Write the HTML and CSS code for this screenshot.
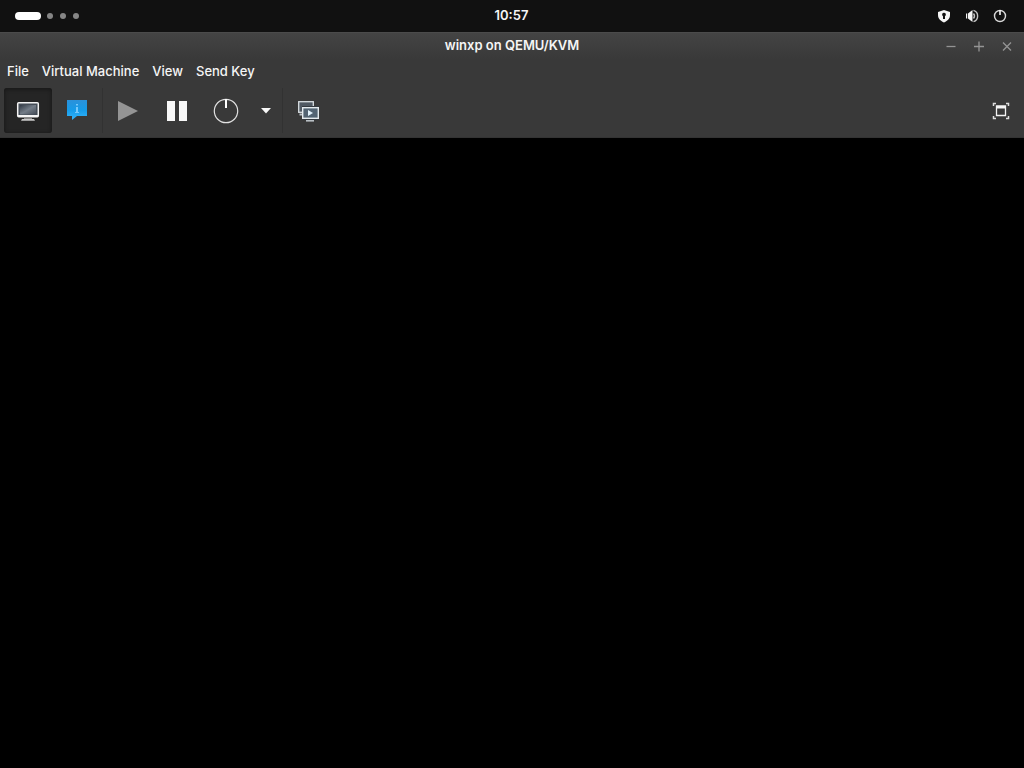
FILE: index.html
```html
<!DOCTYPE html>
<html lang="en">
<head>
<meta charset="utf-8">
<meta name="viewport" content="width=device-width, initial-scale=1">
<title>winxp on QEMU/KVM</title>
<link rel="stylesheet" href="styles.css">
</head>
<body>
<header class="panel">
  <button class="workspaces" aria-label="Workspaces"><span class="dot active"></span><span class="dot"></span><span class="dot"></span><span class="dot"></span></button>
  <time class="clock">10:57</time>
  <div class="status">
    <button aria-label="VPN"><svg width="16" height="16" viewBox="0 0 16 16"><path fill="#f5f5f5" fill-rule="evenodd" d="M8 2 14 4v3c0 4-3 6-6 7.500C5 13 2 11 2 7V4zM8 4.700A1.900 1.900 0 0 0 7 8.200V11h2V8.200A1.900 1.900 0 0 0 8 4.700z"/></svg></button>
    <button aria-label="Volume"><svg width="16" height="16" viewBox="0 0 16 16"><path fill="#f5f5f5" d="M2 5.500h1.200v5H2zM4 5.500 8.500 2v12L4 10.500z"/><path d="M9.500 5.500q2 2.500 0 5M9.500 2.300c5.500 1.700 5.500 9.700 0 11.400" fill="none" stroke="#c4c4c4" stroke-width="1.400"/></svg></button>
    <button aria-label="Power"><svg width="16" height="16" viewBox="0 0 16 16"><circle cx="8" cy="8" r="5.500" fill="none" stroke="#d9d9d9" stroke-width="1.400"/><path d="M8 2v5" stroke="#f5f5f5" stroke-width="1.600"/></svg></button>
  </div>
</header>
<main class="window">
  <div class="titlebar">
    <h1 class="title">winxp on QEMU/KVM</h1>
    <div class="controls">
      <button aria-label="Minimize"><svg width="12" height="12" viewBox="0 0 12 12"><path d="M1.500 6.500h9"/></svg></button>
      <button aria-label="Maximize"><svg width="12" height="12" viewBox="0 0 12 12"><path d="M1 6.500h10M6 1.500v10"/></svg></button>
      <button aria-label="Close"><svg width="12" height="12" viewBox="0 0 12 12"><path d="m2 2.500 8 8m0-8-8 8"/></svg></button>
    </div>
  </div>
  <nav class="menubar">
    <button>File</button><button>Virtual Machine</button><button>View</button><button>Send Key</button>
  </nav>
  <div class="toolbar" role="toolbar" aria-label="Virtual machine">
    <button class="tool pressed" aria-label="Console" aria-pressed="true"><svg width="24" height="24" viewBox="0 0 24 24"><defs><linearGradient id="screen" x2="1" y2="1"><stop stop-color="#333b46"/><stop offset=".5" stop-color="#747d88"/><stop offset="1" stop-color="#434b56"/></linearGradient></defs><rect x="1.700" y="3.700" width="20.600" height="14" rx="1" fill="#454d57" stroke="#f2f2f2" stroke-width="1.500"/><path d="M4 6h16v9.500H4z" fill="url(#screen)"/><path d="M2 16h20v2H2z" fill="#f5f5f5"/><path d="M8 18.500h8v1.500H8z" fill="#888"/><path d="M6 20h12l1 1.800H5z" fill="#c8c8c8"/></svg></button>
    <button class="tool" aria-label="Details"><svg width="24" height="24" viewBox="0 0 24 24"><defs><linearGradient id="bubble" x2="0" y2="1"><stop stop-color="#2b91da"/><stop offset=".5" stop-color="#159be9"/><stop offset="1" stop-color="#36b6fb"/></linearGradient></defs><path d="M2 1h20v16H12l-5 4v-4H2z" fill="url(#bubble)"/><path d="M11 5h2v1.500h-2zm0 3h2v5h1v1h-4v-1h1z" fill="#75c8fb"/></svg></button>
    <span class="separator"></span>
    <button class="tool" aria-label="Run"><svg width="24" height="24" viewBox="0 0 24 24"><path d="M2 2v20l20-10z" fill="#949494"/></svg></button>
    <button class="tool" aria-label="Pause"><svg width="24" height="24" viewBox="0 0 24 24"><path d="M2 2h8v20H2zM14 2h8v20h-8z" fill="#f8f8f8"/></svg></button>
    <button class="tool" aria-label="Shut down"><svg width="26" height="26" viewBox="0 0 26 26"><circle cx="13" cy="13" r="11.700" fill="none" stroke="#e2e2e2" stroke-width="1.200"/><path d="M13 1v9" stroke="#fff" stroke-width="2"/></svg></button>
    <button class="tool narrow" aria-label="Shut down options"><svg width="12" height="6" viewBox="0 0 12 6"><path d="M1 0h10L6 5.500z" fill="#f8f8f8"/></svg></button>
    <span class="separator"></span>
    <button class="tool" aria-label="Snapshots"><svg width="24" height="24" viewBox="0 0 24 24"><rect x="2.700" y="2.700" width="14.600" height="10.600" fill="#505963" stroke="#d9dee2" stroke-width="1.300"/><path d="M3.500 14.500h4v2h-4z" fill="#bbc2c8"/><path d="M6 7h17v14H6z" fill="#343a40"/><rect x="6.700" y="8.700" width="15.600" height="10.600" fill="#536473" stroke="#e4eaee" stroke-width="1.400"/><path d="m12 11 5 3-5 3z" fill="#e2f2fc"/><path d="M10 21h8v1.600h-8z" fill="#b9c0c5"/></svg></button>
    <button class="tool fullscreen" aria-label="Fullscreen"><svg width="18" height="18" viewBox="0 0 18 18"><path d="M4.500 4h9v9.500h-9z" fill="none" stroke="#f3f3f3" stroke-width="1.300"/><path d="M4 4h10v2.500H4z" fill="#f5f5f5"/><path d="M1.500 4V1.500H4M14 1.500h2.500V4M16.500 14v2.500H14M4 16.500H1.500V14" fill="none" stroke="#ddd" stroke-width="1.500"/></svg></button>
  </div>
  <section class="display" aria-label="Guest display"></section>
</main>
</body>
</html>
```
FILE: styles.css
```css
* { box-sizing: border-box; }
body {
  margin: 0;
  min-height: 100vh;
  display: flex;
  flex-direction: column;
  background: #000;
  color: #f5f5f5;
  font: 600 13px/20px Inter, "Noto Sans", sans-serif;
}
button {
  border: 0;
  margin: 0;
  padding: 0;
  background: none;
  color: inherit;
  font: inherit;
}
svg { display: block; }
.panel, .titlebar {
  display: grid;
  grid-template-columns: 1fr auto 1fr;
  align-items: center;
}
.panel {
  height: 32px;
  padding: 0 16px 0 15px;
  background: #111;
}
.workspaces {
  justify-self: start;
  display: flex;
  align-items: center;
  gap: 7px;
}
.dot {
  width: 6px;
  height: 6px;
  border-radius: 4px;
  background: #858585;
}
.dot.active {
  width: 26px;
  height: 8px;
  margin-right: -1px;
  background: #fff;
}
.clock { line-height: 30px; padding-bottom: 2px; }
.status {
  justify-self: end;
  display: flex;
  gap: 12px;
}
.window {
  flex: 1;
  display: flex;
  flex-direction: column;
}
.titlebar {
  height: 27px;
  padding: 0 11px;
  border-top: 1px solid #4b4b4b;
  background: linear-gradient(#444, #393939);
}
.title {
  grid-column: 2;
  margin: 0;
  padding-bottom: 2px;
  font-size: 13px;
  font-weight: 600;
}
.controls {
  justify-self: end;
  display: flex;
  gap: 16px;
}
.controls svg {
  fill: none;
  stroke: #949494;
  stroke-width: 1.3;
}
.menubar {
  height: 26px;
  padding: 0 7px 2px;
  display: flex;
  align-items: center;
  gap: 13px;
  background: #393939;
  font-weight: 500;
}
.toolbar {
  display: flex;
  align-items: stretch;
  height: 53px;
  padding: 3px 0 4px 4px;
  gap: 1px;
  background: #393939;
  border-bottom: 1px solid #333;
}
.tool {
  width: 48px;
  display: grid;
  place-items: center;
}
.pressed {
  border-radius: 3px;
  background: #252525;
  box-shadow: inset 0 1px 4px #151515;
}
.narrow { width: 30px; }
.separator {
  width: 1px;
  background: #323232;
}
.fullscreen {
  width: 46px;
  margin-left: auto;
}
.display {
  flex: 1;
  background: #000;
}
```
